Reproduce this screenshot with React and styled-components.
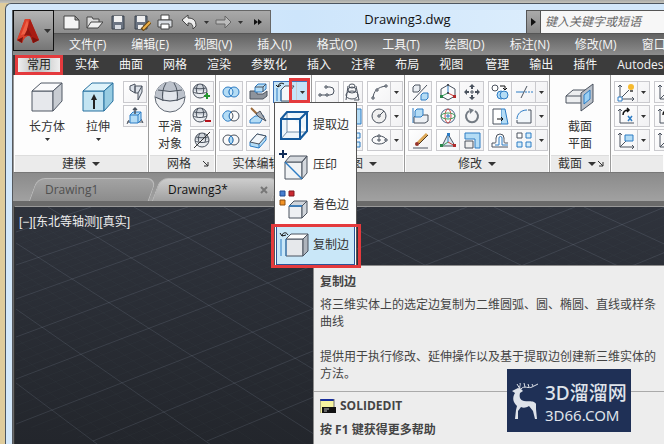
import React from 'react'
import styled, { createGlobalStyle, css } from 'styled-components'

const GlobalStyle = createGlobalStyle`
  * {
    box-sizing: border-box;
  }
  body {
    margin: 0;
    overflow: hidden;
    font: 12px/16px 'Open Sans', 'Noto Sans CJK SC', sans-serif;
    color: #333;
  }
  button, input {
    margin: 0;
    padding: 0;
    border: 0;
    background: none;
    color: inherit;
    font: inherit;
  }
  button, a {
    white-space: nowrap;
  }
  svg {
    display: block;
    flex: none;
  }
`

const Desktop = styled.div`
  display: flex;
  min-height: 100vh;
  padding: 3px 0 0 5px;
  background: linear-gradient(#a9aaa8, #c5c4bb) top / 100% 3px no-repeat, #dfcc9c;
`
const Frame = styled.div`
  display: flex;
  flex: 1;
  min-width: 0;
  padding: 6px 0 0 6px;
  border: solid #4c5660;
  border-width: 1px 0 0 1px;
  border-radius: 6px 0 0 0;
  background: #d3e8fb;
`
const Main = styled.main`
  display: flex;
  flex-direction: column;
  flex: 1;
  min-width: 0;
  border-left: 1px solid #55595e;
`

const Header = styled.header`
  display: grid;
  grid-template-columns: 41px minmax(0, 1fr);
  grid-template-rows: 24px 21px;
`
const AppButton = styled.button`
  z-index: 1;
  grid-area: 1 / 1 / 3 / 2;
  display: flex;
  align-items: center;
  justify-content: center;
  gap: 4px;
  height: 41px;
  border: 1px solid #111;
  background: linear-gradient(#b4b4b4, #767676);
`
const TitleRow = styled.div`
  display: flex;
  justify-content: space-between;
  border-bottom: 1px solid #555;
  background: linear-gradient(90deg, #d9ecfd, #cde5fb 40%, #e3f1fd);
`
const QuickAccess = styled.div`
  display: flex;
  align-items: center;
  width: 217px;
  padding-left: 5px;
  border: 1px solid #666;
  border-width: 1px 1px 0 0;
  background: linear-gradient(#a9a9a9, #8d8d8d);
`
const QuickButton = styled.button`
  display: flex;
  align-items: center;
  justify-content: center;
  width: ${({ $small }) => ($small ? 11 : 24)}px;
`
const Title = styled.h1`
  margin: 0;
  padding-left: 18px;
  font-size: 13px;
  font-weight: 400;
  line-height: 18px;
  color: #111;
`
const Search = styled.form`
  display: flex;
  width: 138px;
  border-top: 1px solid #555;
`
const SearchToggle = styled.button`
  display: flex;
  align-items: center;
  justify-content: center;
  width: 15px;
  border: 1px solid #555;
  border-width: 0 1px;
  background: linear-gradient(#aaa, #888);
`
const SearchInput = styled.input`
  flex: 1;
  min-width: 0;
  padding: 0 4px;
  background: #f7f7f7;
  font-style: italic;

  &::placeholder {
    color: #666;
  }
`
const MenuBar = styled.nav`
  grid-area: 2 / 1 / 3 / 3;
  display: flex;
  align-items: center;
  gap: 25px;
  padding-left: 56px;
  overflow: hidden;
  background: linear-gradient(#626262, #8d8d8d);
  color: #f4f4f4;
`

const TabBar = styled.div`
  display: flex;
  flex: none;
  gap: 2px;
  height: 20px;
  padding-left: 2px;
  overflow: hidden;
  background: #3c3c3c;
`
const TabGroup = styled.div`
  display: flex;
  flex: none;
`
const Tab = styled.button`
  padding: 0 10px;
  color: #f4f4f4;

  ${({ $active }) =>
    $active &&
    css`
      padding: 0 9px;
      border: 3px solid #e43a3d;
      background: linear-gradient(90deg, #eee, #bbb 45%, #eee);
      color: #222;
      line-height: 14px;
    `}
`

const Ribbon = styled.div`
  display: flex;
  flex: none;
  border-left: 1px solid #999;
  border-bottom: 1px solid #777;
  background: #fdfdfd;
`
const PanelBox = styled.section`
  display: flex;
  flex: none;
  flex-direction: column;
  width: ${({ $width }) => $width}px;
  border-right: 1px solid #9b9b9b;

  &:last-child {
    flex: 1;
    min-width: 0;
    overflow: hidden;
    border-right: 0;
  }
`
const PanelBody = styled.div`
  display: flex;
  justify-content: ${({ $align }) => $align || 'flex-start'};
  gap: ${({ $gap = 4 }) => $gap}px;
  height: 80px;
  padding: 6px ${({ $align }) => ($align === 'flex-end' ? 1 : 3)}px 0 3px;
`
const PanelFooter = styled.footer`
  display: flex;
  align-items: center;
  height: 17px;
  margin: 0 1px;
  padding: 0 5px;
  border-top: 1px solid #ddd;
  background: #ebebeb;
  color: #333;
`
const PanelTitle = styled.button`
  display: flex;
  flex: 1;
  align-items: center;
  justify-content: center;
  gap: 6px;
`
const BigButton = styled.button`
  display: flex;
  flex-direction: column;
  align-items: center;
  width: ${({ $width }) => $width}px;
  line-height: 17px;
  white-space: normal;

  svg:first-child {
    margin-bottom: 5px;
  }
  svg:last-child {
    margin-top: 3px;
  }
`
const BigLabel = styled.span`
  width: ${({ $wrap }) => ($wrap ? '24px' : 'auto')};
`
const Column = styled.div`
  display: flex;
  flex: none;
  flex-direction: column;
  gap: 2px;
`
const ToolGroup = styled.div`
  position: relative;
  display: flex;
  width: max-content;
  height: 22px;
  border: 1px solid ${({ $active }) => ($active ? '#3f73b8' : '#cacace')};
  background: ${({ $active }) =>
    $active ? '#c4e4f8' : 'linear-gradient(135deg, #fff, #f1f1f3)'};
`
const Tool = styled.button`
  display: flex;
  align-items: center;
  justify-content: center;
  width: ${({ $narrow }) => ($narrow ? 18 : 22)}px;
  overflow: hidden;

  & + & {
    width: 24px;
    border-left: 1px solid #cacace;
  }
`
const ToolArrow = styled.button`
  position: relative;
  display: flex;
  align-items: center;
  justify-content: center;
  width: 12px;
  border-left: 1px solid #cacace;
`
const Mark = styled.span`
  position: absolute;
  z-index: 5;
  inset: ${({ $inset }) => $inset};
  border: 3px solid #e43a3d;
  pointer-events: none;
`

const Flyout = styled.div`
  position: absolute;
  z-index: 4;
  top: 20px;
  left: 0;
  width: 83px;
  padding: 2px 1px;
  border: 1px solid #555;
  background: #fdfdfd;
`
const FlyoutItem = styled.button`
  position: relative;
  display: flex;
  align-items: center;
  gap: 4px;
  width: 100%;
  height: 40px;
  padding-left: 2px;
  border: 1px solid transparent;

  ${({ $active }) =>
    $active &&
    css`
      border-color: #2a5598;
      background: #c9e7f8;
    `}
`

const FileTabs = styled.nav`
  display: flex;
  flex: none;
  align-items: flex-end;
  gap: 3px;
  height: 28px;
  padding-left: 20px;
  background: linear-gradient(#8b8b8b, #a1a1a1);
`
const FileTab = styled.div`
  position: relative;
  display: flex;
  align-items: center;
  justify-content: space-between;
  width: 120px;
  height: 23px;
  padding: 0 8px 0 12px;
  color: ${({ $active }) => ($active ? '#111' : '#505050')};

  &::before {
    position: absolute;
    inset: 0;
    border: 1px solid #bbb;
    border-bottom: 0;
    border-radius: 8px 10px 0 0;
    background: ${({ $active }) =>
      $active ? 'linear-gradient(#cdcdcd, #a0a0a0)' : 'linear-gradient(#a3a3a3, #8c8c8c)'};
    content: '';
    transform: skewX(-20deg);
  }
`
const FileTabButton = styled.button`
  position: relative;
`
const Workspace = styled.div`
  position: relative;
  display: flex;
  flex: 1;
  min-height: 0;
  border: solid #6a6a6a;
  border-width: 5px 0 0 1px;
`
const Viewport = styled.div`
  position: relative;
  flex: 1;
  padding: 7px 4px;
  overflow: hidden;
  border-top: 1px solid #999;
  border-left: 1px solid #333;
  background: linear-gradient(#2f333c, #23262c);
`
const GridSvg = styled.svg`
  position: absolute;
  top: 0;
  left: 0;
`
const ViewLabel = styled.button`
  position: relative;
  color: #eee;
  font-family: 'Liberation Sans', 'Noto Sans CJK SC', sans-serif;
`

const Tooltip = styled.aside`
  position: absolute;
  z-index: 2;
  top: 59px;
  right: 0;
  bottom: 0;
  left: 299px;
  border: solid #8a8a8a;
  border-width: 1px 0 0 1px;
  background: #ededed;
  color: #444;
  line-height: 17px;
`
const TipText = styled.div`
  padding: 7px 0 9px 6px;
  border-bottom: 1px solid #aaa;

  h2 {
    margin: 0 0 6px;
    font-size: 12px;
  }
  p {
    margin: 0 0 18px;
  }
  p:last-child {
    margin: 0;
  }
`
const TipCommand = styled.div`
  display: flex;
  align-items: center;
  gap: 4px;
  padding: 5px 6px 7px;
  font-weight: 700;
`
const TipHelp = styled.div`
  padding: 0 6px;
  font-weight: 700;
`
const Watermark = styled.div`
  position: absolute;
  z-index: 3;
  right: 33px;
  bottom: 12px;
  display: flex;
  align-items: center;
  gap: 5px;
  height: 63px;
  width: 124px;
  padding-left: 4px;
  background: #1f3056;
  color: #dfe3ea;
`
const WatermarkText = styled.div`
  font: 15px/16px 'Noto Sans', sans-serif;
  white-space: nowrap;
`
const WatermarkName = styled.div`
  font: 500 19px/28px 'Noto Sans', 'Noto Sans CJK SC', sans-serif;
`

const dark = '#4a525e'
const blue = '#2d7cc4'
const light = '#b4dcf5'

const Arrow = ({ size = 5, color = '#333' }) => (
  <svg width={size} height={Math.ceil(size / 2)} viewBox="0 0 10 6" preserveAspectRatio="none">
    <path d="M0 0h10L5 6z" fill={color} />
  </svg>
)

const Globe = () => (
  <>
    <circle cx="9" cy="9" r="7" fill="#e9ecf0" />
    <path d="M2 9a7 7 0 0 1 14 0z" fill="#d0d5dc" />
    <path
      d="M2 9a7 7 0 1 0 14 0a7 7 0 1 0-14 0M3 6c4 1 8 1 12 0M2 10c4 2 10 2 14 0M7 2c-2 4-2 6-1 9M11 2c2 4 2 6 1 9"
      fill="none"
      stroke={dark}
    />
  </>
)

const ucs = <path d="M5 3v14h14M5 17L14 8M3 5l2-2l2 2M17 15l2 2l-2 2" stroke={dark} fill="none" />

const icons = {
  poly: (
    <>
      <path d="M6 4l5-2v9l-5-3zM11 4h7v6l-4 8v-7h-3z" fill="#dce1e8" stroke={dark} />
      <path d="M14 11l4-7" stroke={dark} />
    </>
  ),
  push: (
    <>
      <path d="M3 16h16M5 14l-2 4M17 13l2 4" stroke={dark} />
      <path d="M6 9l3-3h8v8l-3 3H6z" fill={light} stroke={blue} />
      <path d="M6 9h8v8M14 9l3-3" stroke={blue} fill="none" />
      <path d="M11 8V2M9 4l2-2l2 2" stroke={dark} strokeWidth="1.5" fill="none" />
    </>
  ),
  meshPlus: (
    <>
      <Globe />
      <path d="M16 11v6M13 14h6" stroke="#24952e" strokeWidth="2" />
    </>
  ),
  meshMinus: (
    <>
      <Globe />
      <path d="M14 15h6" stroke="#b5121c" strokeWidth="2" />
    </>
  ),
  meshNo: (
    <>
      <g transform="translate(2 1)">
        <Globe />
      </g>
      <path d="M3 18L19 2" stroke="#333" />
    </>
  ),
  union: (
    <g fill={light} stroke={blue}>
      <circle cx="8" cy="10" r="5" />
      <circle cx="14" cy="10" r="5" />
      <path d="M11 6a5 5 0 0 0 0 8a5 5 0 0 0 0-8" fill="#d4ecfa" />
    </g>
  ),
  subtract: (
    <>
      <circle cx="14" cy="10" r="5" fill="#fafafa" stroke={dark} />
      <path d="M11 6a5 5 0 1 0 0 8a5 5 0 0 1 0-8" fill={light} stroke={blue} />
      <path d="M11 6a5 5 0 0 1 0 8" fill="none" stroke={dark} />
    </>
  ),
  intersect: (
    <>
      <g fill="none" stroke={dark}>
        <circle cx="8" cy="10" r="5" />
        <circle cx="14" cy="10" r="5" />
      </g>
      <path d="M11 6a5 5 0 0 0 0 8a5 5 0 0 0 0-8" fill={light} stroke={blue} />
    </>
  ),
  extrudeFace: (
    <>
      <path d="M3 9h7v3h6l4-3v5l-4 3H3z" fill="#8d939c" stroke={dark} />
      <path d="M8 5l3-3h8v5l-4 3H8z" fill={light} stroke={blue} />
      <path d="M8 5h8l3-3M16 5v5" stroke={dark} fill="none" />
    </>
  ),
  slice: (
    <>
      <path d="M3 14l5-4h9l-4 7H3z" fill={light} stroke={blue} />
      <path d="M4 2l7 7" stroke="#9a6a3c" strokeWidth="2" />
      <path d="M9 8l4-3l6 10l-7-4z" fill="#a7adb5" stroke={dark} />
    </>
  ),
  thicken: (
    <>
      <path d="M3 12l7-8l9 2v4l-7 8l-9-2z" fill={light} stroke={blue} />
      <path d="M12 14v4" stroke={blue} />
      <path d="M10 4l9 2l-7 8l-9-2z" fill="#f2f6fa" stroke={dark} />
    </>
  ),
  copyEdge: (
    <>
      <path d="M3 6v13" stroke={blue} />
      <path d="M7 8l4-4h9l-3 4v11H7z" fill="#f4f8fb" stroke={dark} />
      <path d="M7 8v11" stroke={blue} />
      <path d="M10 2C7 0 4 2 4 5M2 3l2 2l3-2" stroke="#111" fill="none" />
    </>
  ),
  pline: (
    <>
      <path d="M4 13h10a4 4 0 0 0 0-8h-3" fill="none" stroke={dark} />
      <path d="M3 12h2v2H3zM10 12h2v2h-2zM9 4h2v2H9z" fill="#fff" stroke={dark} />
    </>
  ),
  helix: (
    <g fill="none" stroke={dark}>
      <ellipse cx="10" cy="4" rx="3" ry="2" />
      <ellipse cx="10" cy="8" rx="4" ry="3" />
      <ellipse cx="10" cy="13" rx="6" ry="4" />
      <path d="M4 18L6 4M17 18L14 4M17 18h-5" />
    </g>
  ),
  arc: (
    <>
      <path d="M5 17C5 9 10 5 18 4" fill="none" stroke={dark} />
      <path d="M4 15h2v2H4zM8 7h2v2H8zM17 3h2v2h-2z" fill="#fff" stroke={dark} />
    </>
  ),
  circle: (
    <>
      <circle cx="11" cy="10" r="7" fill="#f0f0f0" stroke={dark} />
      <path d="M10 9h2v2h-2zM12 9l4-4" fill="#fff" stroke={dark} />
    </>
  ),
  ellipse: (
    <>
      <ellipse cx="11" cy="10" rx="7" ry="4" fill="none" stroke={dark} />
      <path d="M11 8v4M9 10h4M10 5h2v2h-2zM17 9h2v2h-2z" stroke={dark} fill="#fff" />
    </>
  ),
  mirror3: (
    <>
      <path d="M4 5l2-2h5v5l-2 2H4z" fill="#e9edf2" stroke={dark} />
      <path d="M12 13l2-2h5v5l-2 2h-5z" fill={light} stroke={blue} />
      <path d="M4 18L18 3" stroke={dark} />
    </>
  ),
  align: (
    <>
      <path d="M4 2v15" stroke={blue} />
      <path d="M5 11l3-2h11v6l-3 2H5z" fill="#edf0f4" stroke={dark} />
      <path d="M6 5l2-2h6v6l-2 2H6z" fill={light} stroke={blue} />
    </>
  ),
  erase: (
    <>
      <path d="M4 18h15" stroke={dark} />
      <path d="M18 4L9 13" stroke="#dba655" strokeWidth="3" />
      <path d="M19 5L10 14" stroke="#4c3823" />
      <circle cx="8" cy="14" r="2" fill="#96332a" />
    </>
  ),
  gizmoMove: (
    <>
      <path d="M11 3l7 4v7l-7 4l-7-4V7z" fill="none" stroke={dark} />
      <path d="M11 3v8" stroke={blue} />
      <path d="M11 11l-6 3" stroke="#3b9b5a" />
      <path d="M11 11l6 3" stroke="#c83a35" />
      <path d="M10 2h2v2h-2zM10 10h2v2h-2z" fill={dark} />
      <path d="M3 13h3v3H3z" fill="#28854a" />
      <path d="M16 13h3v3h-3z" fill="#b02a2a" />
    </>
  ),
  rotate3: (
    <g fill="none">
      <circle cx="11" cy="10" r="7" stroke="#49678b" />
      <ellipse cx="11" cy="10" rx="3" ry="7" stroke="#d0504c" />
      <ellipse cx="11" cy="10" rx="7" ry="3" stroke="#419b57" />
      <path d="M10 9h2v2h-2z" stroke={blue} />
    </g>
  ),
  scale3: (
    <>
      <path d="M11 4L5 16h13z" fill="#dbe8f0" stroke={dark} />
      <path d="M11 4v8" stroke={blue} />
      <path d="M11 12l-6 4" stroke="#3b9b5a" />
      <path d="M11 12l7 4" stroke="#c83a35" />
      <path d="M10 3h3v3h-3z" fill={blue} />
      <path d="M3 14h3v3H3z" fill="#28854a" />
      <path d="M16 14h3v3h-3z" fill="#b02a2a" />
    </>
  ),
  move: (
    <>
      <path
        d="M11 2l3 3h-2v2h-2V5H8zM11 18l-3-3h2v-2h2v2h2zM3 10l3-3v2h2v2H6v2zM19 10l-3 3v-2h-2V9h2V7z"
        fill={dark}
      />
      <path d="M10 9h2v2h-2z" fill="#fff" stroke={dark} />
    </>
  ),
  rotate: (
    <>
      <path d="M14 5a6 6 0 1 1-6 0" fill="none" stroke="#737a83" strokeWidth="2" />
      <path d="M8 2l5 2l-4 4z" fill="#737a83" />
    </>
  ),
  scale: (
    <>
      <path d="M4 3h15v15h-5V9H4z" fill={light} stroke={blue} />
      <path d="M4 11h8v7H4z" fill="#eee" stroke={dark} />
    </>
  ),
  copy: (
    <>
      <circle cx="6" cy="6" r="3" fill="#fff" stroke={dark} />
      <circle cx="12" cy="13" r="4" fill={light} stroke={blue} />
      <circle cx="15" cy="13" r="4" fill={light} stroke={blue} />
      <path d="M11 4h5v4M14 6l2 2l2-2" fill="none" stroke="#111" />
    </>
  ),
  stretch: (
    <>
      <path d="M12 3h4l3 15h-7z" fill={light} stroke={blue} />
      <path d="M12 3H4v15h8" fill="#fff" stroke={dark} />
      <path d="M8 13h6M12 11l2 2l-2 2" stroke="#111" fill="none" />
    </>
  ),
  offset: (
    <>
      <path d="M3 17v-4h3c1 0 1-1 1-5a4 4 0 0 1 8 0c0 4 0 5 1 5h3" fill="none" stroke={dark} />
      <path d="M3 17h16" stroke={dark} />
      <path d="M6 15h4V8a1 1 0 0 1 3 0v7h6" fill="none" stroke={blue} />
    </>
  ),
  trim: (
    <>
      <path d="M3 10h8" stroke={blue} />
      <path d="M8 16L14 4" stroke={dark} />
      <path d="M12 10h8" stroke={blue} strokeDasharray="2 1" />
    </>
  ),
  fillet: (
    <>
      <path d="M4 17V14C4 8 8 4 15 4h3v13z" fill="#f1f6fa" />
      <path d="M4 13C4 8 8 4 14 4" fill="none" stroke={blue} />
      <path d="M4 14v3h14V4h-3" fill="none" stroke={dark} />
    </>
  ),
  array: (
    <>
      <path d="M4 3h5v5H4z" fill="#fff" stroke={dark} />
      <path d="M13 3h5v5h-5zM4 12h5v5H4zM13 12h5v5h-5z" fill="#d7edfa" stroke={blue} />
    </>
  ),
  ucsLight: (
    <>
      {ucs}
      <path d="M3 15h4v4H3z" fill="#fff" stroke={blue} />
      <circle cx="16" cy="5" r="3" fill="#f6ba2f" />
      <path d="M15 9h3" stroke="#666" strokeWidth="2" />
    </>
  ),
  ucsX: (
    <>
      <path d="M5 3v14h14M3 5l2-2l2 2" stroke={dark} fill="none" />
      <path d="M8 9c0-4 2-5 6-5M12 2l2 2l-2 2" stroke="#111" strokeWidth="1.5" fill="none" />
      <path d="M13 10l4 5M17 10l-4 5" stroke={blue} strokeWidth="1.5" />
    </>
  ),
  ucsView: (
    <>
      {ucs}
      <path d="M10 5h8v6h-8z" fill={light} stroke={blue} />
    </>
  ),
  ucs,
}

const Icon = ({ name }) => (
  <svg width="22" height="20" viewBox="0 0 22 20" strokeWidth="1">
    {icons[name]}
  </svg>
)

const Cube = ({ color = '#505865', front = '#e6e8ec', top = '#fbfbfc', side = '#c8ccd2' }) => (
  <g stroke={color} strokeLinejoin="round">
    <path d="M1 10h21v20H1z" fill={front} />
    <path d="M1 10l9-8h21l-9 8z" fill={top} />
    <path d="M22 10l9-8v18l-9 10z" fill={side} />
  </g>
)

const BoxIcon = () => (
  <svg width="32" height="32" viewBox="0 0 32 32">
    <Cube />
  </svg>
)

const ExtrudeIcon = () => (
  <svg width="32" height="32" viewBox="0 0 32 32">
    <Cube color="#27719f" front="#c3e4f2" top="#dff3fa" side="#97cce2" />
    <path d="M12 28V15" stroke="#222" strokeWidth="2" />
    <path d="M9 19l3-6l3 6z" fill="#222" />
  </svg>
)

const SphereIcon = () => (
  <svg width="32" height="32" viewBox="0 0 32 32">
    <circle cx="16" cy="16" r="15" fill="#eceef1" stroke="#606873" />
    <path d="M1 16a15 15 0 0 1 30 0c-8 6-22 6-30 0" fill="#bcc2cb" />
    <path d="M10 10q6 1 12 0l1 9q-7 2-14 0z" fill="#e1e5eb" />
    <path
      d="M4 9q12 3 24 0M1 16q15 8 30 0M12 2q-5 8-3 18M20 2q5 8 3 18"
      fill="none"
      stroke="#4a525d"
    />
  </svg>
)

const SectionIcon = () => (
  <svg width="32" height="32" viewBox="0 0 32 32">
    <path d="M2 15l7-6h15v13H2z" fill="#eceef0" stroke={dark} />
    <path d="M2 15h15" stroke={dark} />
    <path d="M17 12L29 3v18L17 30z" fill="#b9c0c9" stroke={dark} />
    <path d="M20 14l6-5v9l-6 5z" fill="#9bd1f4" stroke={blue} />
  </svg>
)

const flyoutItems = [
  {
    label: '提取边',
    art: (
      <>
        <path d="M2 9l6-7h20v19l-7 8H2zM8 2v20h20M2 29l6-7" fill="#eef6fb" stroke="#7490aa" />
        <path d="M2 9h19v20H2zM2 9l6-7h20l-7 7M28 2v19l-7 8" fill="none" stroke="#155a9d" strokeWidth="2" />
      </>
    ),
  },
  {
    label: '压印',
    art: (
      <>
        <path d="M6 12h17v17H6z" fill="#f1f3f5" stroke={dark} />
        <path d="M6 12l5-6h17l-5 6zM28 6v17l-5 6V12z" fill="#d5d9de" stroke={dark} />
        <path d="M6 12l17 17" stroke={blue} strokeWidth="1.5" />
        <path d="M4 0v8M0 4h8" stroke="#102c58" strokeWidth="2" />
      </>
    ),
  },
  {
    label: '着色边',
    art: (
      <>
        <path d="M10 16h13v12H10z" fill="#eef0f3" stroke={dark} />
        <path d="M10 16l5-5h13l-5 5zM28 11v12l-5 5V16z" fill="#d0d5db" stroke={dark} />
        <path d="M10 16h13" stroke={blue} strokeWidth="1.5" />
        <path d="M1 1h5v5H1z" fill="#467fd0" stroke="#204d91" />
        <path d="M10 1h5v5h-5z" fill="#cb2930" stroke="#801a20" />
        <path d="M1 10h5v5H1z" fill="#f29325" stroke="#8e5112" />
      </>
    ),
  },
  {
    label: '复制边',
    active: true,
    art: (
      <>
        <path d="M7 9h17v17H7z" fill="#e6e8eb" stroke={dark} />
        <path d="M7 9l5-5h17l-5 5z" fill="#fcfcfc" stroke={dark} />
        <path d="M29 4v17l-5 5V9z" fill="#aeb4bc" stroke={dark} />
        <path d="M2 9v17M7 9v17" stroke={blue} />
        <path d="M9 5C7 1 3 3 3 6M1 3l2 3l4-1" fill="none" stroke="#111" />
      </>
    ),
  },
]

const Tools = ({ names, arrow, narrow }) => (
  <ToolGroup>
    {names.map((name) => (
      <Tool key={name} $narrow={narrow} aria-label={name}>
        <Icon name={name} />
      </Tool>
    ))}
    {arrow && (
      <ToolArrow aria-label="more">
        <Arrow />
      </ToolArrow>
    )}
  </ToolGroup>
)

const ToolColumn = ({ rows, ...rest }) => (
  <Column>
    {rows.map((names) => (
      <Tools key={names[0]} names={names} {...rest} />
    ))}
  </Column>
)

const Panel = ({ title, width, align, gap, arrow = true, launcher, children }) => (
  <PanelBox $width={width}>
    <PanelBody $align={align} $gap={gap}>
      {children}
    </PanelBody>
    <PanelFooter>
      <PanelTitle>
        {title}
        {arrow && <Arrow size={8} />}
      </PanelTitle>
      {launcher && (
        <svg width="6" height="6" viewBox="0 0 6 6" fill="none" stroke="#333">
          <path d="M0 0l5 5M5 1v4H1" />
        </svg>
      )}
    </PanelFooter>
  </PanelBox>
)

const menus = ['文件(F)', '编辑(E)', '视图(V)', '插入(I)', '格式(O)', '工具(T)', '绘图(D)', '标注(N)', '修改(M)', '窗口(W)']

const tabGroups = [
  ['常用'],
  ['实体', '曲面', '网格', '渲染', '参数化', '插入', '注释', '布局', '视图'],
  ['管理', '输出', '插件', 'Autodesk 360'],
]

const quickIcons = {
  new: <path d="M2 3h11l4 4v9H2zM13 3v4h4" fill="#f4f4f4" stroke="#444" />,
  open: (
    <>
      <path d="M2 15V4h5l1 2h6v3" fill="#ddd" stroke="#444" />
      <path d="M2 15l4-6h12l-5 6z" fill="#f0f0f0" stroke="#444" />
    </>
  ),
  save: (
    <>
      <path d="M3 3h12v13H3z" fill="#6b7482" stroke="#3a424d" />
      <path d="M5 3h8v6H5z" fill="#f1f1f1" />
      <path d="M6 12h6v4H6z" fill="#d8dce2" />
    </>
  ),
  saveAs: (
    <>
      <path d="M2 3h12v13H2z" fill="#6b7482" stroke="#3a424d" />
      <path d="M4 3h8v6H4zM5 12h5v4H5z" fill="#eee" />
      <path d="M9 17l8-8" stroke="#6a4a18" strokeWidth="4" />
      <path d="M10 16l7-7" stroke="#efb149" strokeWidth="2" />
    </>
  ),
  print: (
    <>
      <path d="M5 2h8v5H5z" fill="#fff" stroke="#444" />
      <path d="M2 7h14v7H2z" fill="#d9dde2" stroke="#444" />
      <path d="M5 11h8v5H5z" fill="#fff" stroke="#444" />
    </>
  ),
  undo: <path d="M2 7l6-5v3c6 0 8 3 8 8l-3 3c0-4-1-6-5-6v3z" fill="#eee" stroke="#444" />,
  redo: <path d="M1 7h9V3l6 6l-6 6v-4H1z" fill="#bbb" stroke="#666" />,
}

const QuickIcon = ({ name }) => (
  <QuickButton aria-label={name}>
    <svg width="18" height="18" viewBox="0 0 18 18">
      {quickIcons[name]}
    </svg>
  </QuickButton>
)

const TitleBar = () => (
  <Header>
    <AppButton aria-label="application menu">
      <svg width="24" height="28" viewBox="0 0 24 28">
        <path d="M9 2h5l9 21l-6 3l-2-6c-3-2-6-1-9 6l-5-3z" fill="#c92a1c" />
        <path d="M9 2L1 23l5 3c1-3 3-6 5-7l3-17z" fill="#dc3f2a" />
        <path d="M11 3L5 18l4-1l4-8z" fill="#ee6146" />
        <path d="M14 2l9 21l-6 3l-6-14z" fill="#a81c13" />
        <path d="M8 19l4-8l4 8c-3-1-5-1-8 0z" fill="#8e1610" />
        <path d="M1 23l6-3l-1 6zM16 20l7 3l-6 3z" fill="#7c130d" />
      </svg>
      <Arrow size={7} />
    </AppButton>
    <TitleRow>
      <QuickAccess>
        {['new', 'open', 'save', 'saveAs', 'print', 'undo'].map((name) => (
          <QuickIcon key={name} name={name} />
        ))}
        <QuickButton $small aria-label="undo list">
          <Arrow />
        </QuickButton>
        <QuickIcon name="redo" />
        <QuickButton $small aria-label="redo list">
          <Arrow />
        </QuickButton>
        <QuickButton aria-label="customize">
          <svg width="8" height="6" viewBox="0 0 8 6">
            <path d="M0 0l4 3l-4 3zM4 0l4 3l-4 3z" fill="#111" />
          </svg>
        </QuickButton>
      </QuickAccess>
      <Title>Drawing3.dwg</Title>
      <Search>
        <SearchToggle type="button" aria-label="search">
          <svg width="5" height="8" viewBox="0 0 5 8">
            <path d="M0 0l5 4l-5 4z" fill="#111" />
          </svg>
        </SearchToggle>
        <SearchInput aria-label="键入关键字或短语" placeholder="键入关键字或短语" />
      </Search>
    </TitleRow>
    <MenuBar>
      {menus.map((name) => (
        <button key={name}>{name}</button>
      ))}
    </MenuBar>
  </Header>
)

const EdgeTool = () => (
  <ToolGroup $active>
    <Tool aria-label="复制边">
      <Icon name="copyEdge" />
    </Tool>
    <ToolArrow aria-label="边">
      <Arrow />
      <Mark $inset="-4px -2px -1px -8px" />
    </ToolArrow>
    <Flyout>
      {flyoutItems.map(({ label, art, active }) => (
        <FlyoutItem key={label} $active={active}>
          <svg width="30" height="30" viewBox="0 0 30 30">
            {art}
          </svg>
          {label}
          {active && <Mark $inset="-2px -7px -4px -6px" />}
        </FlyoutItem>
      ))}
    </Flyout>
  </ToolGroup>
)

// each entry is x1, y1, x2, y2
const falling = [
  [1, 176, 86, 240],
  [1, 102, 199, 240],
  [1, 36, 319, 240],
  [33, 0, 319, 175],
  [119, 0, 369, 142],
  [209, 0, 400, 107],
  [299, 0, 490, 100],
  [389, 0, 580, 95],
  [479, 0, 660, 86],
  [569, 0, 660, 42],
]
const rising = [
  [1, 25, 76, 0],
  [1, 58, 173, 0],
  [1, 92, 259, 0],
  [1, 130, 352, 0],
  [1, 172, 452, 0],
  [1, 217, 560, 0],
  [78, 234, 650, 0],
  [192, 234, 760, 0],
]

const between = (lines) =>
  lines.slice(1).flatMap((line, i) =>
    [0.2, 0.4, 0.6, 0.8].map((t) => line.map((v, k) => lines[i][k] * (1 - t) + v * t))
  )

const toPath = (lines) => lines.map(([a, b, c, d]) => `M${a} ${b}L${c} ${d}`).join('')

const ModelGrid = () => (
  <GridSvg width="660" height="240" fill="none" stroke="#a8b4c8">
    <path d={toPath([...falling, ...rising])} opacity="0.15" />
    <path d={toPath([...between(falling), ...between(rising)])} opacity="0.03" />
  </GridSvg>
)

const EdgeTooltip = () => (
  <Tooltip role="tooltip">
    <TipText>
      <h2>复制边</h2>
      <p>将三维实体上的选定边复制为二维圆弧、圆、椭圆、直线或样条曲线</p>
      <p>提供用于执行修改、延伸操作以及基于提取边创建新三维实体的方法。</p>
    </TipText>
    <TipCommand>
      <svg width="16" height="16" viewBox="0 0 16 16">
        <path d="M0 1h14v14H0z" fill="#f6f3a0" />
        <path d="M0 1h14v2H0z" fill="#172d9d" />
        <path d="M0 1v14M14 1v8" stroke="#6c6c6c" />
        <path d="M2 9h14v6H2z" fill="#111" />
        <path d="M4 11h5M4 13h3" stroke="#bbb" />
      </svg>
      SOLIDEDIT
    </TipCommand>
    <TipHelp>按 F1 键获得更多帮助</TipHelp>
  </Tooltip>
)

const Logo = () => (
  <Watermark>
    <svg width="29" height="38" viewBox="0 0 29 38">
      <path
        d="M1 9l6-3l3 1l2 2l-3 2c-1 4 0 7 4 8c4 1 10-1 12 3l0 5l1 10h-2l-2-8l-4-5c-3 2-6 2-8 1l-3 4v8H4l1-9l1-4c-4-4-5-8-2-13z"
        fill="#dfe3ea"
      />
      <path
        d="M9 7L6 2M9 7C8 4 10 3 9 1M10 7c3-4 8 0 11-2l6-3M14 5l-1-4M18 5l-1-3M22 4l-1-2"
        fill="none"
        stroke="#dfe3ea"
      />
    </svg>
    <WatermarkText>
      <WatermarkName>3D溜溜网</WatermarkName>
      3D66.COM
    </WatermarkText>
  </Watermark>
)

const App = () => (
  <Desktop>
    <GlobalStyle />
    <Frame>
      <Main>
        <TitleBar />
        <TabBar>
          {tabGroups.map((group) => (
            <TabGroup key={group[0]}>
              {group.map((name) => (
                <Tab key={name} $active={name === '常用'}>
                  {name}
                </Tab>
              ))}
            </TabGroup>
          ))}
        </TabBar>
        <Ribbon>
          <Panel title="建模" width={135} align="flex-end" gap={1}>
            <BigButton $width={52}>
              <BoxIcon />
              <BigLabel>长方体</BigLabel>
              <Arrow />
            </BigButton>
            <BigButton $width={48}>
              <ExtrudeIcon />
              <BigLabel>拉伸</BigLabel>
              <Arrow />
            </BigButton>
            <ToolColumn rows={[['poly'], ['push']]} />
          </Panel>
          <Panel title="网格" width={67} align="flex-end" gap={3} arrow={false} launcher>
            <BigButton $width={34}>
              <SphereIcon />
              <BigLabel $wrap>平滑对象</BigLabel>
            </BigButton>
            <ToolColumn rows={[['meshPlus'], ['meshMinus'], ['meshNo']]} />
          </Panel>
          <Panel title="实体编辑" width={96} gap={3}>
            <ToolColumn rows={[['union'], ['subtract'], ['intersect']]} />
            <ToolColumn rows={[['extrudeFace'], ['slice'], ['thicken']]} />
            <EdgeTool />
          </Panel>
          <Panel title="绘图" width={93}>
            <ToolColumn rows={[['pline']]} />
            <ToolColumn narrow rows={[['helix'], ['scale'], ['array']]} />
            <ToolColumn arrow rows={[['arc'], ['circle'], ['ellipse']]} />
          </Panel>
          <Panel title="修改" width={145}>
            <ToolColumn rows={[['mirror3'], ['align'], ['erase']]} />
            <ToolColumn
              rows={[
                ['gizmoMove', 'move'],
                ['rotate3', 'rotate'],
                ['scale3', 'scale'],
              ]}
            />
            <ToolColumn
              arrow
              rows={[
                ['copy', 'trim'],
                ['stretch', 'fillet'],
                ['offset', 'array'],
              ]}
            />
          </Panel>
          <Panel title="截面" width={61} align="center" launcher>
            <BigButton $width={40}>
              <SectionIcon />
              <BigLabel $wrap>截面平面</BigLabel>
            </BigButton>
          </Panel>
          <Panel title="" arrow={false}>
            <ToolColumn arrow rows={[['ucsLight'], ['ucsX'], ['ucsView']]} />
            <ToolColumn rows={[['ucs'], ['ucsX'], ['ucsView']]} />
          </Panel>
        </Ribbon>
        <FileTabs>
          <FileTab>
            <FileTabButton>Drawing1</FileTabButton>
          </FileTab>
          <FileTab $active>
            <FileTabButton>Drawing3*</FileTabButton>
            <FileTabButton aria-label="close">
              <svg width="8" height="8" viewBox="0 0 8 8" stroke="#777" strokeWidth="2">
                <path d="M1 1l6 6M7 1L1 7" />
              </svg>
            </FileTabButton>
          </FileTab>
        </FileTabs>
        <Workspace>
          <Viewport>
            <ModelGrid />
            <ViewLabel>[−][东北等轴测][真实]</ViewLabel>
          </Viewport>
          <EdgeTooltip />
          <Logo />
        </Workspace>
      </Main>
    </Frame>
  </Desktop>
)

export default App
